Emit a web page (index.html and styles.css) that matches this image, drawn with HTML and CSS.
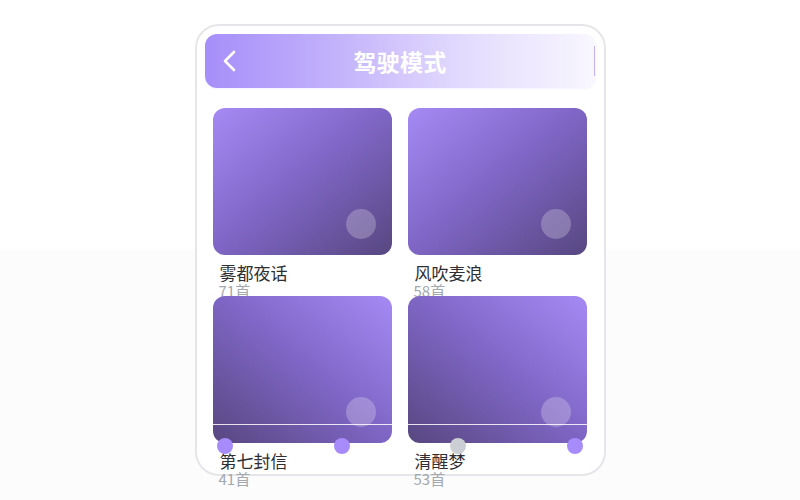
FILE: index.html
```html
<!DOCTYPE html>
<html lang="zh">
<head>
<meta charset="utf-8">
<link rel="stylesheet" href="styles.css">
</head>
<body>
<div class="phone">
  <div class="header">
    <svg class="back" width="16" height="24" viewBox="0 0 16 24"><path d="M12 3 L3 12 L12 21" fill="none" stroke="#fff" stroke-width="2.6" stroke-linecap="round" stroke-linejoin="round"/></svg>
    <div class="title">驾驶模式</div>
    <div class="edge"></div>
  </div>
  <div class="grid">
    <div class="item">
      <div class="card down"><span class="knob"></span></div>
      <div class="name">雾都夜话</div>
      <div class="count">71首</div>
    </div>
    <div class="item">
      <div class="card down"><span class="knob"></span></div>
      <div class="name">风吹麦浪</div>
      <div class="count">58首</div>
    </div>
    <div class="item">
      <div class="card up"><span class="knob"></span></div>
      <div class="name">第七封信</div>
      <div class="count">41首</div>
    </div>
    <div class="item">
      <div class="card up"><span class="knob"></span></div>
      <div class="name">清醒梦</div>
      <div class="count">53首</div>
    </div>
  </div>
  <div class="rule"></div>
  <span class="dot d1"></span>
  <span class="dot d2"></span>
  <span class="dot d3 gray"></span>
  <span class="dot d4"></span>
</div>
</body>
</html>
```

FILE: styles.css
```css
html, body {
  margin: 0;
  height: 500px;
}
body {
  background: linear-gradient(#ffffff 0, #ffffff 250px, #fcfcfd 250px, #fcfcfd 100%);
  font-family: "Noto Sans CJK SC", "Noto Sans", sans-serif;
  display: flex;
  justify-content: center;
  align-items: flex-start;
  overflow: hidden;
}
.phone {
  position: relative;
  margin-top: 24px;
  width: 411px;
  height: 452px;
  border: 2px solid #e6e6ea;
  border-radius: 24px;
  background: #fff;
  padding: 8px;
  box-sizing: border-box;
}
.header {
  position: relative;
  height: 54px;
  border-radius: 12px;
  background: linear-gradient(90deg, #a68ef9 0%, #c4b4fb 35%, #e2dafd 65%, #f9f7ff 100%);
  display: flex;
  align-items: center;
  justify-content: center;
  box-shadow: 0 1px 2px rgba(160, 140, 230, 0.12);
}
.back {
  position: absolute;
  left: 17px;
  top: 15px;
}
.title {
  color: #fff;
  font-size: 23px;
  font-weight: 700;
  letter-spacing: 0.3px;
}
.edge {
  position: absolute;
  right: 1px;
  top: 12px;
  width: 1px;
  height: 30px;
  background: #c2b3f7;
}
.grid {
  display: grid;
  grid-template-columns: 179px 179px;
  grid-auto-rows: 172px;
  column-gap: 16px;
  row-gap: 16px;
  margin-top: 20px;
  padding-left: 8px;
}
.item {
  display: flex;
  flex-direction: column;
}
.card {
  position: relative;
  height: 147px;
  border-radius: 12px;
  flex: none;
  z-index: 1;
}
.card.down {
  background: linear-gradient(to bottom right, #a68af5 0%, #7e65c4 50%, #574780 100%);
}
.card.up {
  background: linear-gradient(to top right, #574780 0%, #7e65c4 50%, #a68af5 100%);
}
.knob {
  position: absolute;
  right: 16px;
  bottom: 16px;
  width: 30px;
  height: 30px;
  border-radius: 50%;
  background: rgba(255, 255, 255, 0.24);
}
.name {
  margin-top: 9px;
  padding-left: 7px;
  font-size: 17px;
  line-height: 18px;
  color: #2e2e33;
}
.count {
  padding-left: 6px;
  font-size: 15px;
  line-height: 15px;
  color: #a3a7ae;
  margin-top: 1px;
}
.rule {
  position: absolute;
  left: 10px;
  top: 398px;
  width: 385px;
  height: 1px;
  background: rgba(255, 255, 255, 0.85);
  z-index: 2;
}
.dot {
  position: absolute;
  top: 412px;
  width: 16px;
  height: 16px;
  border-radius: 50%;
  background: #a78bfa;
  z-index: 3;
}
.dot.gray {
  background: #cbced3;
}
.d1 { left: 20px; }
.d2 { left: 137px; }
.d3 { left: 253px; }
.d4 { left: 370px; }
```
